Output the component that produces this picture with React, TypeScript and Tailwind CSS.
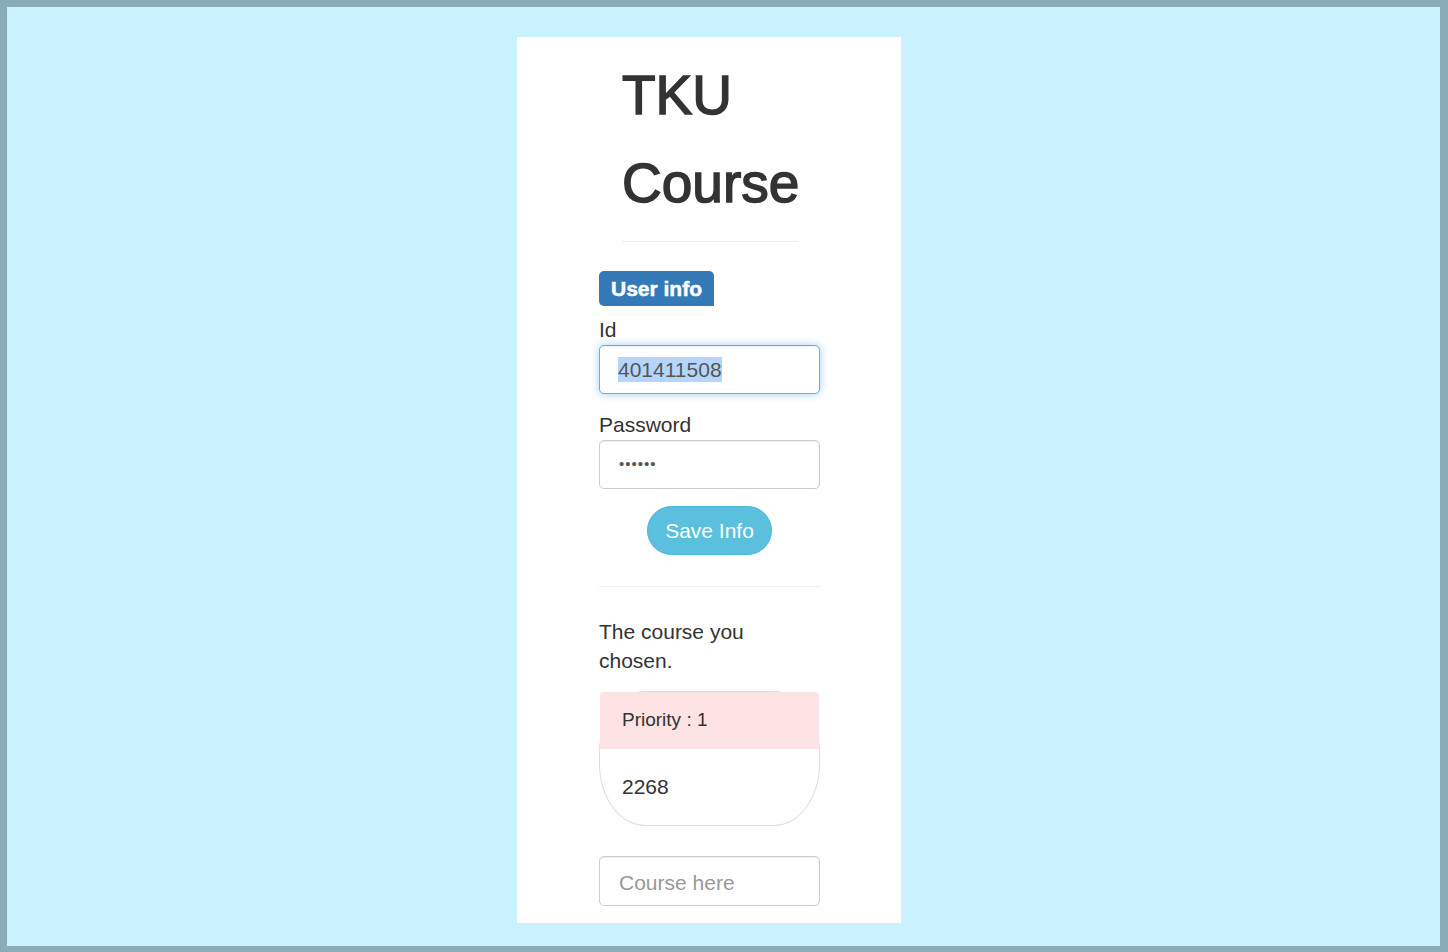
import React from "react";

export default function App() {
  const font = { fontFamily: '"Liberation Sans", Arial, Helvetica, sans-serif' };
  return (
    <div
      className="box-border h-[952px] w-[1448px] overflow-hidden border-t-[7px] border-l-[7px] border-r-[8px] border-b-[6px] border-[#8aacb8] bg-[#c9f2fe]"
      style={font}
    >
      <div className="ml-[510px] mt-[30px] w-[384px] bg-white pb-[17px] pt-[14px] text-[#333]">
        <h1 className="ml-[105px] w-[178px] text-[55px] leading-[88px] font-normal [-webkit-text-stroke:1.5px_#333]">
          TKU Course
        </h1>
        <hr className="ml-[105px] mt-[14px] w-[176px] border-0 border-t border-[#eee]" />

        <div className="ml-[82px] w-[221px]">
          <div className="mt-[29px]">
            <span className="inline-block h-[35px] rounded-[5px] rounded-br-none bg-[#337ab7] px-[12px] text-[21px] font-bold leading-[35px] text-white [-webkit-text-stroke:0.5px_#fff]">
              User info
            </span>
          </div>

          <div className="mt-[12px] text-[21px] leading-[24px]">Id</div>
          <div className="mt-[3px] flex h-[49px] items-center rounded-[5px] border border-[#66afe9] bg-white px-[18px] text-[21px] text-[#555] shadow-[inset_0_1px_1px_rgba(0,0,0,0.075),0_0_8px_rgba(102,175,233,0.6)]">
            <span className="bg-[#b4d5fe] leading-[25px]">401411508</span>
          </div>

          <div className="mt-[19px] text-[21px] leading-[24px]">Password</div>
          <div className="mt-[3px] flex h-[49px] items-center rounded-[5px] border border-[#ccc] bg-white px-[19px] text-[15px] tracking-[1px] text-[#555] shadow-[inset_0_1px_1px_rgba(0,0,0,0.075)]">
            ••••••
          </div>

          <div className="mt-[17px] flex justify-center">
            <button className="h-[49px] w-[125px] rounded-full border border-[#46b8da] bg-[#5bc0de] text-[21px] text-white">
              Save Info
            </button>
          </div>

          <hr className="mt-[31px] border-0 border-t border-[#eee]" />

          <p className="mt-[30px] w-[190px] text-[21px] leading-[29px]">The course you chosen.</p>

          <div className="mt-[16px] rounded-[46px/62px] border border-[#ddd] bg-white">
            <div className="flex h-[57px] items-center rounded-t-[4px] bg-[#fde3e3] px-[22px] text-[19px]">
              Priority : 1
            </div>
            <div className="flex h-[76px] items-center px-[22px] text-[21px]">2268</div>
          </div>

          <div className="mt-[30px] flex h-[50px] items-center rounded-[5px] border border-[#ccc] bg-white px-[19px] pt-[4px] text-[21px] text-[#999] shadow-[inset_0_1px_1px_rgba(0,0,0,0.075)]">
            Course here
          </div>
        </div>
      </div>
    </div>
  );
}
